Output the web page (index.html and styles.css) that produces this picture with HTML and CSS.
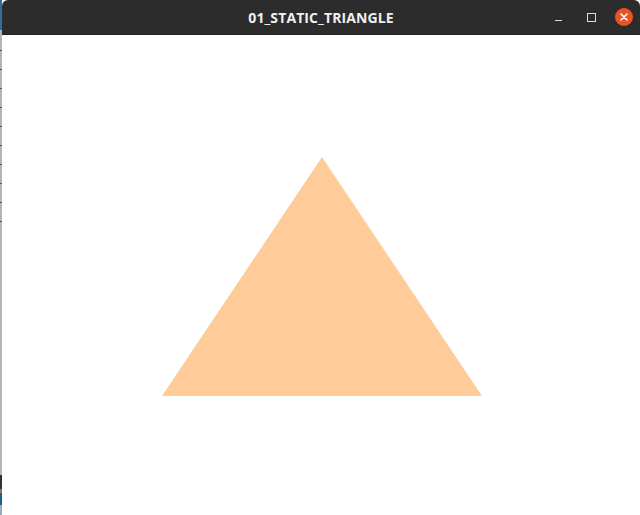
FILE: index.html
```html
<!DOCTYPE html>
<html lang="en">

<head>
    <meta charset="UTF-8">
    <meta name="viewport" content="width=device-width, initial-scale=1.0">
    <title>01_STATIC_TRIANGLE</title>
    <link rel="stylesheet" href="styles.css">
</head>

<body>
    <div class="desktop">
        <div class="desktop-edge">
            <div class="edge-top"></div>
            <div class="edge-ticks"></div>
            <div class="edge-bottom"></div>
        </div>
        <div class="window">
            <header class="titlebar">
                <span class="title">01_STATIC_TRIANGLE</span>
                <div class="controls">
                    <button class="ctl minimize" aria-label="Minimize"></button>
                    <button class="ctl maximize" aria-label="Maximize"></button>
                    <button class="ctl close" aria-label="Close">
                        <svg width="8" height="8" viewBox="0 0 8 8">
                            <path d="M1 1 L7 7 M7 1 L1 7" stroke="#fff" stroke-width="1.6" stroke-linecap="round" />
                        </svg>
                    </button>
                </div>
            </header>
            <main class="canvas">
                <svg width="638" height="480" viewBox="0 0 638 480">
                    <polygon points="160,361 320,122 480,361" fill="#fecb99" />
                </svg>
            </main>
        </div>
    </div>
</body>

</html>
```

FILE: styles.css
```css
/* Desktop and window frame */
body {
    margin: 0;
    background: #fff;
    font-family: "Open Sans", "Noto Sans", sans-serif;
}

.desktop {
    display: flex;
    width: 640px;
    height: 515px;
    overflow: hidden;
}

.desktop-edge {
    display: flex;
    flex-direction: column;
    width: 2px;
    background: #b4b4b4;
}

.edge-top {
    height: 30px;
    background: #2d6f9e;
}

.edge-ticks {
    height: 180px;
    margin-top: 20px;
    background: repeating-linear-gradient(to bottom, #555 0, #555 1px, transparent 1px, transparent 19px);
}

.edge-bottom {
    margin-top: auto;
    height: 40px;
    background: linear-gradient(to bottom, #333 0, #333 14px, #8a7a5a 14px, #8a7a5a 18px, #1f5f86 18px, #1f5f86 30px, #9ab 30px);
}

.window {
    flex: 1;
    display: flex;
    flex-direction: column;
}

.titlebar {
    position: relative;
    display: flex;
    align-items: center;
    justify-content: center;
    height: 35px;
    flex-shrink: 0;
    background: #2d2c2c;
    border-radius: 6px 6px 0 0;
    border-bottom: 1px solid #222;
    box-sizing: border-box;
}

.title {
    color: #f0f0f0;
    font-size: 14px;
    font-weight: 700;
    letter-spacing: 0.1px;
}

.controls {
    position: absolute;
    right: 7px;
    top: 0;
    bottom: 0;
    display: flex;
    align-items: center;
    gap: 15px;
}

.ctl {
    border: none;
    padding: 0;
    background: none;
    cursor: pointer;
    width: 18px;
    height: 18px;
    display: flex;
    align-items: center;
    justify-content: center;
}

.minimize::after {
    content: "";
    width: 7px;
    height: 1px;
    margin-top: 6px;
    background: #ddd;
}

.maximize::after {
    content: "";
    width: 7px;
    height: 7px;
    border: 1px solid #ddd;
}

.close {
    border-radius: 50%;
    background: #e95420;
}

.canvas {
    flex: 1;
    background: #fff;
}

.canvas svg {
    display: block;
}
```
